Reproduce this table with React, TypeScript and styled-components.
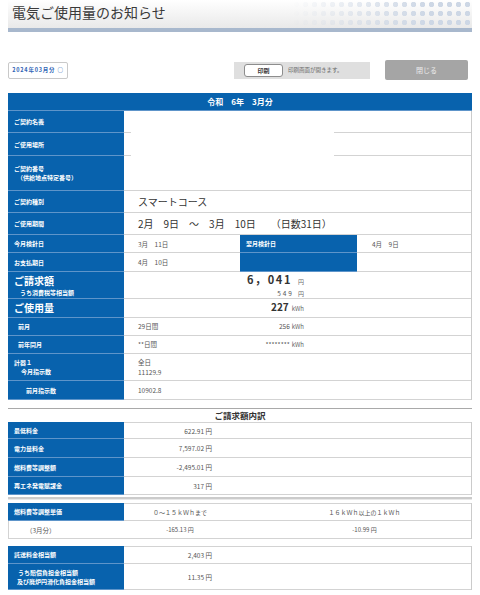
import React from 'react';
import styled, { createGlobalStyle } from 'styled-components';

const BLUE = '#0862ad';
const BLUE_SEP = '#5e95ca';
const LINE = '#d3d3d3';

const Global = createGlobalStyle`
  html, body { margin: 0; padding: 0; background: #fff; }
  body { font-family: "Noto Sans CJK JP", "Noto Sans", sans-serif; color: #333; }
  * { box-sizing: border-box; }
`;

const Page = styled.div`
  width: 480px;
  padding: 0 8px 8px;
`;

const TitleBar = styled.header`
  position: relative;
  height: 32px;
  border-bottom: 4px solid #a8b8cd;
  background: linear-gradient(#ffffff, #e9e9e9);
  overflow: hidden;
  &::after {
    content: '';
    position: absolute;
    top: 0;
    right: 0;
    bottom: 0;
    width: 180px;
    background: radial-gradient(circle, #cdd7e5 2.4px, transparent 3px) 0 0 / 9px 9px;
    -webkit-mask-image: linear-gradient(to right, transparent, #000 75%);
    mask-image: linear-gradient(to right, transparent, #000 75%);
  }
`;

const Title = styled.h1`
  position: relative;
  z-index: 1;
  margin: 0;
  padding-left: 4px;
  font-size: 14px;
  font-weight: 400;
  line-height: 24px;
  color: #3a3a3a;
`;

const Controls = styled.div`
  display: flex;
  align-items: center;
  height: 20px;
  margin-top: 28px;
`;

const MonthBadge = styled.div`
  width: 60px;
  height: 17px;
  border: 1px solid #c9c9c9;
  border-radius: 2px;
  display: flex;
  align-items: center;
  justify-content: center;
  font-size: 5.5px;
  font-weight: 700;
  letter-spacing: 0.8px;
  color: #2f64b5;
`;

const PrintBox = styled.div`
  margin-left: auto;
  width: 136px;
  height: 17px;
  background: #dfdfdf;
  display: flex;
  align-items: center;
  padding-left: 10px;
`;

const PrintButton = styled.div`
  width: 39px;
  height: 13px;
  background: #fff;
  border: 1px solid #8d8d8d;
  border-radius: 3px;
  display: flex;
  align-items: center;
  justify-content: center;
  font-size: 6px;
  font-weight: 700;
  color: #333;
`;

const PrintNote = styled.span`
  margin-left: 5px;
  font-size: 5.5px;
  color: #666;
`;

const CloseButton = styled.div`
  margin-left: 15px;
  margin-right: 4px;
  width: 83px;
  height: 20px;
  background: #a5a5a5;
  border-radius: 2px;
  display: flex;
  align-items: center;
  justify-content: center;
  font-size: 7px;
  color: #ececec;
`;

const Table = styled.section<{ $mt?: number }>`
  width: 464px;
  margin-top: ${p => p.$mt ?? 0}px;
`;

const TableHead = styled.div`
  height: 18px;
  background: ${BLUE};
  color: #fff;
  font-size: 8px;
  font-weight: 700;
  display: flex;
  align-items: center;
  justify-content: center;
  white-space: pre;
  border-bottom: 1px solid ${BLUE_SEP};
`;

const Row = styled.div<{ $h: number; $cols?: string }>`
  display: grid;
  grid-template-columns: ${p => p.$cols ?? '116px 116px 117px 1fr'};
  height: ${p => p.$h}px;
  border-right: 1px solid #cbcbcb;
`;

const Label = styled.div<{ $indent?: number }>`
  background: ${BLUE};
  color: #fff;
  font-size: 6px;
  font-weight: 700;
  line-height: 9px;
  padding-left: ${p => 6 + (p.$indent ?? 0)}px;
  display: flex;
  flex-direction: column;
  justify-content: center;
  border-bottom: 1px solid ${BLUE_SEP};
  white-space: pre;
`;

const LabelBig = styled.span`
  font-size: 10px;
  line-height: 14px;
`;

const SubLine = styled.span<{ $indent?: number }>`
  padding-left: ${p => p.$indent ?? 0}px;
`;

const Cell = styled.div<{ $span?: number; $cut?: boolean; $pl?: number; $top?: boolean; $border?: boolean }>`
  grid-column: span ${p => p.$span ?? 1};
  padding-left: ${p => p.$pl ?? 14}px;
  display: flex;
  flex-direction: column;
  justify-content: center;
  font-size: 6.5px;
  line-height: 10px;
  color: #555;
  white-space: pre;
  border-left: ${p => (p.$border ? `1px solid ${LINE}` : 'none')};
  border-top: ${p => (p.$top ? `1px solid ${LINE}` : 'none')};
  border-bottom: ${p => (p.$cut ? 'none' : `1px solid ${LINE}`)};
  background: ${p =>
    p.$cut
      ? `linear-gradient(${LINE}, ${LINE}) left bottom / 7px 1px no-repeat, linear-gradient(${LINE}, ${LINE}) right bottom / 137px 1px no-repeat`
      : 'transparent'};
`;

const BigText = styled.span`
  font-size: 10px;
  line-height: 14px;
  color: #333;
`;

const Figures = styled.div`
  width: 166px;
  display: flex;
  justify-content: space-between;
  align-items: baseline;
`;

const Amount = styled.div`
  width: 166px;
  text-align: right;
`;

const AmountLine = styled.div<{ $lh: number }>`
  line-height: ${p => p.$lh}px;
`;

const AmountMain = styled.span`
  font-size: 11px;
  font-weight: 700;
  letter-spacing: 1.6px;
  color: #333;
`;

const AmountSub = styled.span`
  font-size: 6.5px;
  letter-spacing: 2px;
  color: #555;
`;

const Unit = styled.span<{ $gap?: number }>`
  font-size: 6px;
  color: #666;
  margin-left: ${p => p.$gap ?? 2}px;
  letter-spacing: 0;
`;

const Usage = styled.span`
  font-size: 10px;
  font-weight: 700;
  color: #333;
`;

const Rule = styled.hr`
  margin: 8px 0 0;
  border: 0;
  border-top: 1px solid #a9a9a9;
  height: 0;
`;

const SectionTitle = styled.h2`
  margin: 0;
  height: 13px;
  font-size: 8.5px;
  font-weight: 700;
  line-height: 13px;
  text-align: center;
  color: #333;
`;

const Money = styled.div`
  width: 74px;
  text-align: right;
`;

const DoubleRule = styled.div`
  margin: 2px 0 3px;
  height: 3px;
  border-top: 2px solid #cbcbcb;
  border-bottom: 1px solid #e8e8e8;
`;

const Center = styled.div<{ $pl?: number; $top?: boolean }>`
  display: flex;
  align-items: center;
  justify-content: center;
  padding-left: ${p => p.$pl ?? 0}px;
  font-size: 6px;
  color: #555;
  white-space: pre;
  border-top: ${p => (p.$top ? `1px solid ${LINE}` : 'none')};
  border-bottom: 1px solid ${LINE};
`;

const BCOLS = '116px 1fr';
const UCOLS = '116px 112px 1fr';

export default function App() {
  return (
    <Page>
      <Global />
      <TitleBar>
        <Title>電気ご使用量のお知らせ</Title>
      </TitleBar>

      <Controls>
        <MonthBadge>2024年03月分 ○</MonthBadge>
        <PrintBox>
          <PrintButton>印刷</PrintButton>
          <PrintNote>印刷画面が開きます。</PrintNote>
        </PrintBox>
        <CloseButton>閉じる</CloseButton>
      </Controls>

      <Table $mt={13}>
        <TableHead>令和　6年　3月分</TableHead>
        <Row $h={22}>
          <Label>ご契約名義</Label>
          <Cell $span={3} $cut />
        </Row>
        <Row $h={23}>
          <Label>ご使用場所</Label>
          <Cell $span={3} $cut />
        </Row>
        <Row $h={35}>
          <Label>
            <span>ご契約番号</span>
            <SubLine $indent={3}>（供給地点特定番号）</SubLine>
          </Label>
          <Cell $span={3} />
        </Row>
        <Row $h={22}>
          <Label>ご契約種別</Label>
          <Cell $span={3}>
            <BigText>スマートコース</BigText>
          </Cell>
        </Row>
        <Row $h={22}>
          <Label>ご使用期間</Label>
          <Cell $span={3}>
            <BigText>2月　9日　～　3月　10日　　（日数31日）</BigText>
          </Cell>
        </Row>
        <Row $h={18}>
          <Label>今月検針日</Label>
          <Cell>3月　11日</Cell>
          <Label>翌月検針日</Label>
          <Cell $pl={15}>4月　9日</Cell>
        </Row>
        <Row $h={19}>
          <Label>お支払期日</Label>
          <Cell>4月　10日</Cell>
          <Label />
          <Cell />
        </Row>
        <Row $h={27}>
          <Label>
            <LabelBig>ご請求額</LabelBig>
            <SubLine $indent={6}>うち消費税等相当額</SubLine>
          </Label>
          <Cell $span={3}>
            <Amount>
              <AmountLine $lh={15}>
                <AmountMain>6，041</AmountMain>
                <Unit $gap={6}>円</Unit>
              </AmountLine>
              <AmountLine $lh={9}>
                <AmountSub>549</AmountSub>
                <Unit $gap={4}>円</Unit>
              </AmountLine>
            </Amount>
          </Cell>
        </Row>
        <Row $h={19}>
          <Label>
            <LabelBig>ご使用量</LabelBig>
          </Label>
          <Cell $span={3}>
            <Amount>
              <Usage>227</Usage>
              <Unit $gap={3}>kWh</Unit>
            </Amount>
          </Cell>
        </Row>
        <Row $h={18}>
          <Label $indent={4}>前月</Label>
          <Cell $span={3}>
            <Figures>
              <span>29日間</span>
              <span>
                256<Unit>kWh</Unit>
              </span>
            </Figures>
          </Cell>
        </Row>
        <Row $h={18}>
          <Label $indent={4}>前年同月</Label>
          <Cell $span={3}>
            <Figures>
              <span>**日間</span>
              <span>
                ********<Unit>kWh</Unit>
              </span>
            </Figures>
          </Cell>
        </Row>
        <Row $h={27}>
          <Label>
            <span>計器１</span>
            <SubLine $indent={7}>今月指示数</SubLine>
          </Label>
          <Cell $span={3}>
            <span>全日</span>
            <span>11129.9</span>
          </Cell>
        </Row>
        <Row $h={19}>
          <Label $indent={12}>前月指示数</Label>
          <Cell $span={3}>10902.8</Cell>
        </Row>
      </Table>

      <Rule />
      <SectionTitle>ご請求額内訳</SectionTitle>

      <Table>
        <Row $h={17} $cols={BCOLS}>
          <Label>最低料金</Label>
          <Cell $top>
            <Money>622.91 円</Money>
          </Cell>
        </Row>
        <Row $h={19} $cols={BCOLS}>
          <Label>電力量料金</Label>
          <Cell>
            <Money>7,597.02 円</Money>
          </Cell>
        </Row>
        <Row $h={19} $cols={BCOLS}>
          <Label>燃料費等調整額</Label>
          <Cell>
            <Money>-2,495.01 円</Money>
          </Cell>
        </Row>
        <Row $h={18} $cols={BCOLS}>
          <Label>再エネ発電賦課金</Label>
          <Cell>
            <Money>317 円</Money>
          </Cell>
        </Row>
      </Table>

      <DoubleRule />

      <Table>
        <Row $h={18} $cols={UCOLS}>
          <Label>燃料費等調整単価</Label>
          <Center $top>０～１５ｋＷｈまで</Center>
          <Center $top $pl={22}>１６ｋＷｈ以上の１ｋＷｈ</Center>
        </Row>
        <Row $h={18} $cols={UCOLS}>
          <Cell $border $pl={17}>（3月分）</Cell>
          <Center>-165.13 円</Center>
          <Center $pl={22}>-10.99 円</Center>
        </Row>
      </Table>

      <Table $mt={7}>
        <Row $h={18} $cols={BCOLS}>
          <Label>託送料金相当額</Label>
          <Cell $top>
            <Money>2,403 円</Money>
          </Cell>
        </Row>
        <Row $h={26} $cols={BCOLS}>
          <Label>
            <SubLine $indent={4}>うち賠償負担金相当額</SubLine>
            <SubLine $indent={3}>及び廃炉円滑化負担金相当額</SubLine>
          </Label>
          <Cell>
            <Money>11.35 円</Money>
          </Cell>
        </Row>
      </Table>
    </Page>
  );
}
